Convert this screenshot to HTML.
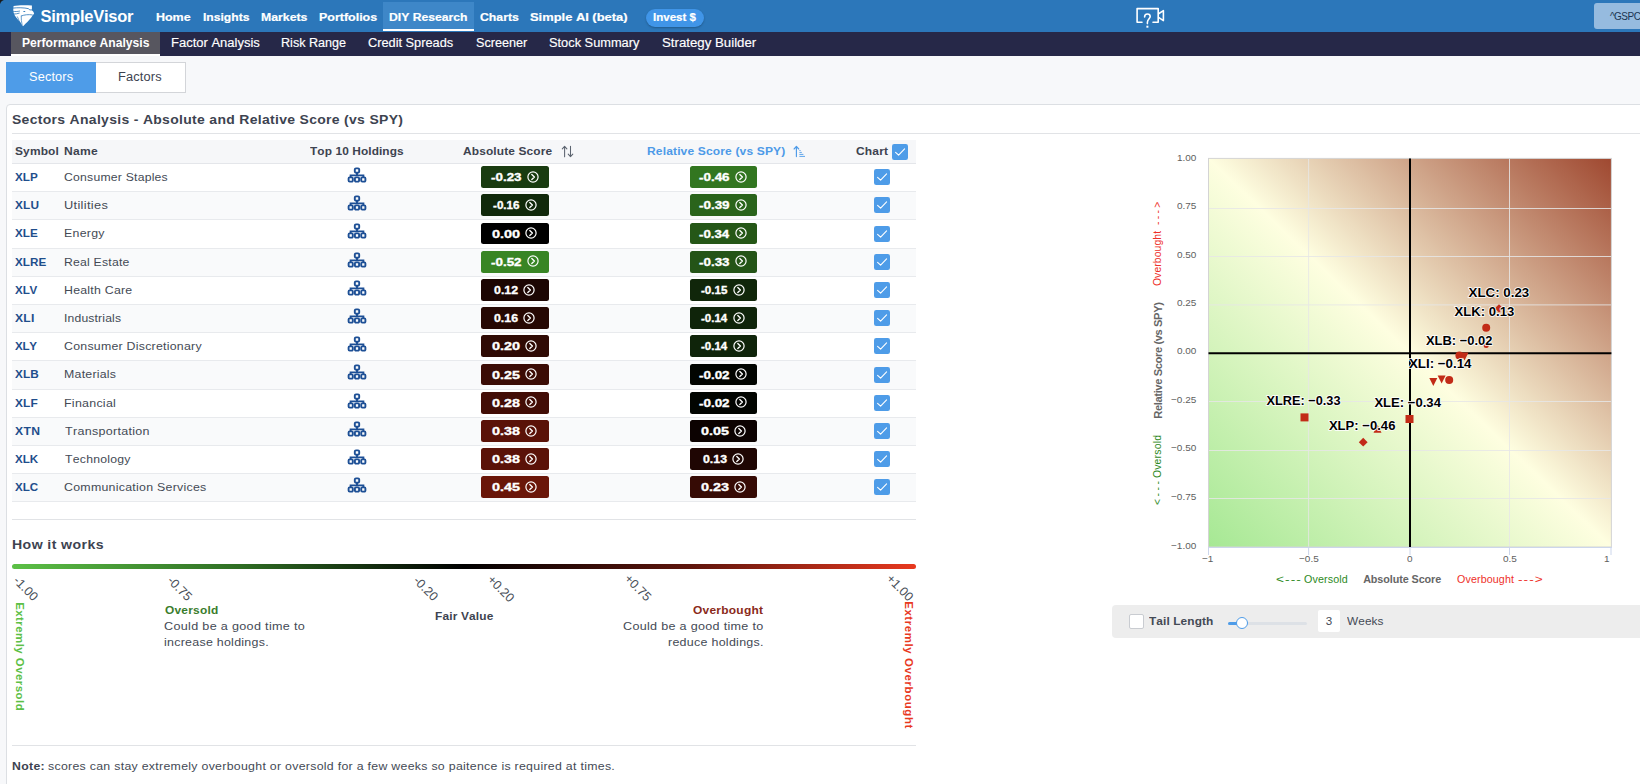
<!DOCTYPE html>
<html><head><meta charset="utf-8"><title>SimpleVisor - Performance Analysis</title>
<style>
html,body{margin:0;padding:0;width:1640px;height:784px;overflow:hidden;background:#f7f8fa;}
body{font-family:"Liberation Sans", sans-serif;font-kerning:none;}
.page{position:relative;width:1640px;height:784px;overflow:hidden;background:#f7f8fa;}
.t{position:absolute;line-height:0;white-space:nowrap;font-kerning:none;}
.b{position:absolute;box-sizing:border-box;}
svg{position:absolute;overflow:visible;}
</style></head><body><div class="page">
<div class="b" style="left:0px;top:0px;width:1640px;height:32px;background:#2c77ba;"></div>
<div class="b" style="left:0px;top:0px;width:4px;height:4px;background:#1a1a1a;"></div>
<div class="b" style="left:0px;top:0px;width:8px;height:8px;background:#2c77ba;border-top-left-radius:5px;"></div>
<svg style="left:10px;top:2px" width="28" height="26" viewBox="0 0 28 26">
<path fill="#fff" d="M3.6 4.0 C8 3.0 16 2.9 21.9 3.6 L21.9 8.2 C23 9 23.9 10.2 24.1 11.7 L22.7 13.3 C21 16.6 16.4 21 13 24.2 C12 23 11 21.5 10.3 20 C8.5 18.5 6.3 15.5 4.8 13.4 C4.2 12.2 3.6 10.8 3.3 9.3 C3.2 7.5 3.3 5.6 3.6 4.0 Z"/>
<g fill="none" stroke="#2c77ba" stroke-linecap="round">
<path stroke-width="0.85" d="M2.8 6.1 C8 5.5 14 5.6 18.6 6.7 L19.7 7.9 L23.4 7.9"/>
<path stroke-width="0.8" d="M2.6 9.3 C5 9.7 7.5 9.6 9.6 9.1"/>
<path stroke-width="0.8" d="M3.2 12.1 C5.5 12 7.4 11.8 9.2 11.2"/>
<path stroke-width="0.7" d="M7.4 14.8 C8.4 16.6 9 18.6 9.8 21.4"/>
<path stroke-width="0.7" d="M11.2 14.1 C11.1 17 11.5 20 12.1 23"/>
<path stroke-width="0.8" d="M11.4 13.9 C14.5 12.7 18.5 12.3 22.3 12.9"/>
</g>
<ellipse cx="14.3" cy="9.5" rx="1.1" ry="0.6" fill="#2c77ba"/>
</svg>
<div class="t" style="left:40.52px;top:15.58px;font-size:16.50px;color:#fff;font-weight:bold;letter-spacing:-0.244px;">SimpleVisor</div>
<div class="b" style="left:383px;top:2px;width:91px;height:29px;background:#3e87c8;"></div>
<div class="b" style="left:383px;top:29px;width:91px;height:2px;background:#ffffff;"></div>
<div class="t" style="left:155.97px;top:17.41px;font-size:11.80px;color:#fff;font-weight:bold;transform:scaleX(1.0572);transform-origin:0 0;-webkit-text-stroke:0.2px #fff;">Home</div>
<div class="t" style="left:202.89px;top:17.41px;font-size:11.80px;color:#fff;font-weight:bold;transform:scaleX(1.0259);transform-origin:0 0;-webkit-text-stroke:0.2px #fff;">Insights</div>
<div class="t" style="left:260.88px;top:17.41px;font-size:11.80px;color:#fff;font-weight:bold;transform:scaleX(1.0409);transform-origin:0 0;-webkit-text-stroke:0.2px #fff;">Markets</div>
<div class="t" style="left:319.17px;top:17.41px;font-size:11.80px;color:#fff;font-weight:bold;transform:scaleX(1.0559);transform-origin:0 0;-webkit-text-stroke:0.2px #fff;">Portfolios</div>
<div class="t" style="left:389.18px;top:17.41px;font-size:11.80px;color:#fff;font-weight:bold;transform:scaleX(1.0327);transform-origin:0 0;-webkit-text-stroke:0.2px #fff;">DIY Research</div>
<div class="t" style="left:479.50px;top:17.41px;font-size:11.80px;color:#fff;font-weight:bold;transform:scaleX(1.0382);transform-origin:0 0;-webkit-text-stroke:0.2px #fff;">Charts</div>
<div class="t" style="left:530.13px;top:17.41px;font-size:11.80px;color:#fff;font-weight:bold;transform:scaleX(1.0936);transform-origin:0 0;-webkit-text-stroke:0.2px #fff;">Simple AI (beta)</div>
<div class="b" style="left:646px;top:9px;width:58px;height:17.5px;background:#4095e8;border-radius:9px;box-shadow:0 1px 2px rgba(0,0,0,.25);"></div>
<div class="t" style="left:653.23px;top:17.42px;font-size:11.20px;color:#fff;font-weight:bold;transform:scaleX(1.0294);transform-origin:0 0;-webkit-text-stroke:0.2px #fff;">Invest $</div>
<svg style="left:1134px;top:6px" width="34" height="24" viewBox="1134 6 34 24">
<path d="M1142 22.2 H1137.1 V8.6 H1158.2 V22.2 H1153" fill="none" stroke="#fff" stroke-width="1.6" stroke-linecap="round" stroke-linejoin="round"/>
<path d="M1158.2 14 L1163.4 10.6 V20.6 L1158.2 17.2" fill="none" stroke="#fff" stroke-width="1.6" stroke-linejoin="round"/>
<path d="M1144.6 17 C1144.6 15 1145.8 14 1147.4 14 C1149 14 1150.2 15 1150.2 16.6 C1150.2 18.6 1147.6 19.2 1147.4 22.2 V23.6" fill="none" stroke="#fff" stroke-width="1.6" stroke-linecap="round"/>
<rect x="1146.4" y="25.7" width="2" height="2" fill="#fff"/>
</svg>
<div class="b" style="left:1594px;top:3px;width:60px;height:26px;background:#96bbdf;border-radius:3px;"></div>
<div class="t" style="left:1609.95px;top:16.54px;font-size:10.00px;color:#1a3552;letter-spacing:-0.526px;">^GSPC</div>
<div class="b" style="left:0px;top:32px;width:1640px;height:24px;background:#262848;"></div>
<div class="b" style="left:11px;top:32px;width:149px;height:22px;background:#57565f;"></div>
<div class="b" style="left:11px;top:54px;width:149px;height:1.5px;background:#ffffff;"></div>
<div class="t" style="left:21.89px;top:43.44px;font-size:12.00px;color:#fff;font-weight:bold;transform:scaleX(1.0107);transform-origin:0 0;">Performance Analysis</div>
<div class="t" style="left:170.93px;top:43.44px;font-size:12.00px;color:#fff;transform:scaleX(1.0830);transform-origin:0 0;-webkit-text-stroke:0.15px #fff;">Factor Analysis</div>
<div class="t" style="left:281.37px;top:43.44px;font-size:12.00px;color:#fff;transform:scaleX(1.0494);transform-origin:0 0;-webkit-text-stroke:0.15px #fff;">Risk Range</div>
<div class="t" style="left:368.35px;top:43.44px;font-size:12.00px;color:#fff;transform:scaleX(1.0633);transform-origin:0 0;-webkit-text-stroke:0.15px #fff;">Credit Spreads</div>
<div class="t" style="left:475.73px;top:43.44px;font-size:12.00px;color:#fff;transform:scaleX(1.0532);transform-origin:0 0;-webkit-text-stroke:0.15px #fff;">Screener</div>
<div class="t" style="left:548.92px;top:43.44px;font-size:12.00px;color:#fff;transform:scaleX(1.0676);transform-origin:0 0;-webkit-text-stroke:0.15px #fff;">Stock Summary</div>
<div class="t" style="left:661.60px;top:43.44px;font-size:12.00px;color:#fff;transform:scaleX(1.1036);transform-origin:0 0;-webkit-text-stroke:0.15px #fff;">Strategy Builder</div>
<div class="b" style="left:6px;top:62px;width:90px;height:30.6px;background:#4e9ce8;"></div>
<div class="t" style="left:28.72px;top:76.94px;font-size:12.30px;color:#fff;letter-spacing:0.155px;transform:scaleX(1.0354);transform-origin:0 0;">Sectors</div>
<div class="b" style="left:96px;top:62px;width:90px;height:30.6px;background:#ffffff;border:1px solid #d3d5d9;border-left:none;"></div>
<div class="t" style="left:118.45px;top:76.94px;font-size:12.30px;color:#3d4350;letter-spacing:0.170px;transform:scaleX(1.0401);transform-origin:0 0;">Factors</div>
<div class="b" style="left:6px;top:104px;width:1660px;height:720px;background:#ffffff;border:1px solid #dcdfe3;border-radius:4px;"></div>
<div class="t" style="left:12.30px;top:119.50px;font-size:13.00px;color:#3d4350;font-weight:bold;letter-spacing:0.294px;transform:scaleX(1.0736);transform-origin:0 0;">Sectors Analysis - Absolute and Relative Score (vs SPY)</div>
<div class="b" style="left:12px;top:133px;width:1640px;height:1px;background:#e1e3e6;"></div>
<div class="b" style="left:12px;top:140px;width:904px;height:23.4px;background:#f6f7f9;"></div>
<div class="b" style="left:12px;top:163px;width:904px;height:1px;background:#e4e6ea;"></div>
<div class="t" style="left:14.86px;top:150.98px;font-size:11.60px;color:#3d4350;font-weight:bold;letter-spacing:0.152px;transform:scaleX(1.0288);transform-origin:0 0;">Symbol</div>
<div class="t" style="left:64.19px;top:150.98px;font-size:11.60px;color:#3d4350;font-weight:bold;letter-spacing:0.266px;transform:scaleX(1.0410);transform-origin:0 0;">Name</div>
<div class="t" style="left:310.07px;top:150.98px;font-size:11.60px;color:#3d4350;font-weight:bold;letter-spacing:0.097px;transform:scaleX(1.0233);transform-origin:0 0;">Top 10 Holdings</div>
<div class="t" style="left:463.10px;top:150.98px;font-size:11.60px;color:#3d4350;font-weight:bold;letter-spacing:0.120px;transform:scaleX(1.0284);transform-origin:0 0;">Absolute Score</div>
<div class="t" style="left:647.00px;top:150.98px;font-size:11.60px;color:#4d9ae8;font-weight:bold;letter-spacing:0.140px;transform:scaleX(1.0373);transform-origin:0 0;">Relative Score (vs SPY)</div>
<div class="t" style="left:855.91px;top:150.98px;font-size:11.60px;color:#3d4350;font-weight:bold;letter-spacing:0.167px;transform:scaleX(1.0349);transform-origin:0 0;">Chart</div>
<svg style="left:558px;top:143px" width="20" height="18" viewBox="558 143 20 18">
<g fill="none" stroke="#5c6470" stroke-width="1.05" stroke-linecap="round" stroke-linejoin="round">
<path d="M564.6 156.8 V146.4 M562.3 148.9 L564.6 146.3 L566.9 148.9"/>
<path d="M570.5 146.2 V156.6 M568.2 154.1 L570.5 156.7 L572.8 154.1"/>
</g></svg>
<svg style="left:790px;top:143px" width="18" height="18" viewBox="790 143 18 18">
<g fill="none" stroke="#4d9ae8" stroke-width="1.15" stroke-linecap="round" stroke-linejoin="round">
<path d="M796.4 156.6 V146.5 M794.1 149 L796.4 146.4 L798.7 149"/>
</g>
<g stroke="#4d9ae8" stroke-width="0.9">
<path d="M799.4 150.5 H800.6 M799.4 152.4 H801.8 M799.4 154.4 H803.4 M799.4 156.4 H805"/>
</g></svg>
<svg style="left:892px;top:144px" width="16" height="16" viewBox="0 0 16 16">
<rect x="0" y="0" width="16" height="16" rx="2.2" fill="#4e9ce8"/>
<path d="M3.6 8.4 L6.6 11.2 L12.6 4.8" fill="none" stroke="#fff" stroke-width="1.1" stroke-linecap="round" stroke-linejoin="round"/>
</svg>
<div class="b" style="left:12px;top:191.19px;width:904px;height:1px;background:#e8eaed;"></div>
<div class="t" style="left:15.10px;top:176.98px;font-size:11.60px;color:#1f4e8c;font-weight:bold;letter-spacing:0.047px;transform:scaleX(1.0065);transform-origin:0 0;">XLP</div>
<div class="t" style="left:64.38px;top:176.98px;font-size:11.60px;color:#444a55;letter-spacing:0.210px;transform:scaleX(1.0527);transform-origin:0 0;">Consumer Staples</div>
<svg style="left:347.00px;top:166.00px" width="20" height="18" viewBox="-10 -9 20 18">
<g fill="none" stroke="#1d4f95" stroke-width="1.9">
<rect x="-2.2" y="-6.6" width="4.4" height="4.4" rx="1.2"/>
<path d="M0 -2.2 V0.2 M-6.4 2.6 V0.4 H6.4 V2.6"/>
<rect x="-8.4" y="2.4" width="4.2" height="4.2" rx="1.1"/>
<rect x="-2.1" y="2.4" width="4.2" height="4.2" rx="1.1"/>
<rect x="4.2" y="2.4" width="4.2" height="4.2" rx="1.1"/>
</g></svg>
<div class="b" style="left:481px;top:166.3px;width:68px;height:21.7px;background:#193b10;border-radius:2.5px;"></div>
<div class="t" style="left:490.90px;top:177.25px;font-size:11.40px;color:#fff;font-weight:bold;transform:scaleX(1.1760);transform-origin:0 0;-webkit-text-stroke:0.35px #fff;">-0.23</div>
<svg style="left:525.58px;top:169.80px" width="14" height="14" viewBox="-7 -7 14 14">
<circle cx="0" cy="0" r="5.1" fill="none" stroke="#fff" stroke-width="1.2"/>
<path d="M-1.2 -2.5 L1.4 0 L-1.2 2.5" fill="none" stroke="#fff" stroke-width="1.35" stroke-linecap="round" stroke-linejoin="round"/>
</svg>
<div class="b" style="left:690px;top:166.3px;width:67px;height:21.7px;background:#327620;border-radius:2.5px;"></div>
<div class="t" style="left:699.40px;top:177.25px;font-size:11.40px;color:#fff;font-weight:bold;transform:scaleX(1.1760);transform-origin:0 0;-webkit-text-stroke:0.35px #fff;">-0.46</div>
<svg style="left:734.07px;top:169.80px" width="14" height="14" viewBox="-7 -7 14 14">
<circle cx="0" cy="0" r="5.1" fill="none" stroke="#fff" stroke-width="1.2"/>
<path d="M-1.2 -2.5 L1.4 0 L-1.2 2.5" fill="none" stroke="#fff" stroke-width="1.35" stroke-linecap="round" stroke-linejoin="round"/>
</svg>
<svg style="left:874px;top:169.20000000000002px" width="16" height="16" viewBox="0 0 16 16">
<rect x="0" y="0" width="16" height="16" rx="2.2" fill="#4e9ce8"/>
<path d="M3.6 8.4 L6.6 11.2 L12.6 4.8" fill="none" stroke="#fff" stroke-width="1.1" stroke-linecap="round" stroke-linejoin="round"/>
</svg>
<div class="b" style="left:12px;top:192.19px;width:904px;height:27.59px;background:#f9fafb;"></div>
<div class="b" style="left:12px;top:219.38px;width:904px;height:1px;background:#e8eaed;"></div>
<div class="t" style="left:15.10px;top:205.17px;font-size:11.60px;color:#1f4e8c;font-weight:bold;letter-spacing:0.139px;transform:scaleX(1.0190);transform-origin:0 0;">XLU</div>
<div class="t" style="left:64.01px;top:205.17px;font-size:11.60px;color:#444a55;letter-spacing:0.286px;transform:scaleX(1.1053);transform-origin:0 0;">Utilities</div>
<svg style="left:347.00px;top:194.19px" width="20" height="18" viewBox="-10 -9 20 18">
<g fill="none" stroke="#1d4f95" stroke-width="1.9">
<rect x="-2.2" y="-6.6" width="4.4" height="4.4" rx="1.2"/>
<path d="M0 -2.2 V0.2 M-6.4 2.6 V0.4 H6.4 V2.6"/>
<rect x="-8.4" y="2.4" width="4.2" height="4.2" rx="1.1"/>
<rect x="-2.1" y="2.4" width="4.2" height="4.2" rx="1.1"/>
<rect x="4.2" y="2.4" width="4.2" height="4.2" rx="1.1"/>
</g></svg>
<div class="b" style="left:481px;top:194.49px;width:68px;height:21.7px;background:#11290b;border-radius:2.5px;"></div>
<div class="t" style="left:492.89px;top:205.44px;font-size:11.40px;color:#fff;font-weight:bold;transform:scaleX(1.0228);transform-origin:0 0;-webkit-text-stroke:0.35px #fff;">-0.16</div>
<svg style="left:523.65px;top:197.99px" width="14" height="14" viewBox="-7 -7 14 14">
<circle cx="0" cy="0" r="5.1" fill="none" stroke="#fff" stroke-width="1.2"/>
<path d="M-1.2 -2.5 L1.4 0 L-1.2 2.5" fill="none" stroke="#fff" stroke-width="1.35" stroke-linecap="round" stroke-linejoin="round"/>
</svg>
<div class="b" style="left:690px;top:194.49px;width:67px;height:21.7px;background:#2a641b;border-radius:2.5px;"></div>
<div class="t" style="left:699.40px;top:205.44px;font-size:11.40px;color:#fff;font-weight:bold;transform:scaleX(1.1766);transform-origin:0 0;-webkit-text-stroke:0.35px #fff;">-0.39</div>
<svg style="left:734.07px;top:197.99px" width="14" height="14" viewBox="-7 -7 14 14">
<circle cx="0" cy="0" r="5.1" fill="none" stroke="#fff" stroke-width="1.2"/>
<path d="M-1.2 -2.5 L1.4 0 L-1.2 2.5" fill="none" stroke="#fff" stroke-width="1.35" stroke-linecap="round" stroke-linejoin="round"/>
</svg>
<svg style="left:874px;top:197.39000000000001px" width="16" height="16" viewBox="0 0 16 16">
<rect x="0" y="0" width="16" height="16" rx="2.2" fill="#4e9ce8"/>
<path d="M3.6 8.4 L6.6 11.2 L12.6 4.8" fill="none" stroke="#fff" stroke-width="1.1" stroke-linecap="round" stroke-linejoin="round"/>
</svg>
<div class="b" style="left:12px;top:247.57px;width:904px;height:1px;background:#e8eaed;"></div>
<div class="t" style="left:15.10px;top:233.36px;font-size:11.60px;color:#1f4e8c;font-weight:bold;letter-spacing:0.059px;transform:scaleX(1.0080);transform-origin:0 0;">XLE</div>
<div class="t" style="left:63.99px;top:233.36px;font-size:11.60px;color:#444a55;letter-spacing:0.280px;transform:scaleX(1.0624);transform-origin:0 0;">Energy</div>
<svg style="left:347.00px;top:222.38px" width="20" height="18" viewBox="-10 -9 20 18">
<g fill="none" stroke="#1d4f95" stroke-width="1.9">
<rect x="-2.2" y="-6.6" width="4.4" height="4.4" rx="1.2"/>
<path d="M0 -2.2 V0.2 M-6.4 2.6 V0.4 H6.4 V2.6"/>
<rect x="-8.4" y="2.4" width="4.2" height="4.2" rx="1.1"/>
<rect x="-2.1" y="2.4" width="4.2" height="4.2" rx="1.1"/>
<rect x="4.2" y="2.4" width="4.2" height="4.2" rx="1.1"/>
</g></svg>
<div class="b" style="left:481px;top:222.68px;width:68px;height:21.7px;background:#000000;border-radius:2.5px;"></div>
<div class="t" style="left:492.15px;top:233.63px;font-size:11.40px;color:#fff;font-weight:bold;transform:scaleX(1.2671);transform-origin:0 0;-webkit-text-stroke:0.35px #fff;">0.00</div>
<svg style="left:524.28px;top:226.18px" width="14" height="14" viewBox="-7 -7 14 14">
<circle cx="0" cy="0" r="5.1" fill="none" stroke="#fff" stroke-width="1.2"/>
<path d="M-1.2 -2.5 L1.4 0 L-1.2 2.5" fill="none" stroke="#fff" stroke-width="1.35" stroke-linecap="round" stroke-linejoin="round"/>
</svg>
<div class="b" style="left:690px;top:222.68px;width:67px;height:21.7px;background:#255717;border-radius:2.5px;"></div>
<div class="t" style="left:699.41px;top:233.63px;font-size:11.40px;color:#fff;font-weight:bold;transform:scaleX(1.1598);transform-origin:0 0;-webkit-text-stroke:0.35px #fff;">-0.34</div>
<svg style="left:734.07px;top:226.18px" width="14" height="14" viewBox="-7 -7 14 14">
<circle cx="0" cy="0" r="5.1" fill="none" stroke="#fff" stroke-width="1.2"/>
<path d="M-1.2 -2.5 L1.4 0 L-1.2 2.5" fill="none" stroke="#fff" stroke-width="1.35" stroke-linecap="round" stroke-linejoin="round"/>
</svg>
<svg style="left:874px;top:225.58px" width="16" height="16" viewBox="0 0 16 16">
<rect x="0" y="0" width="16" height="16" rx="2.2" fill="#4e9ce8"/>
<path d="M3.6 8.4 L6.6 11.2 L12.6 4.8" fill="none" stroke="#fff" stroke-width="1.1" stroke-linecap="round" stroke-linejoin="round"/>
</svg>
<div class="b" style="left:12px;top:248.57000000000002px;width:904px;height:27.59px;background:#f9fafb;"></div>
<div class="b" style="left:12px;top:275.76000000000005px;width:904px;height:1px;background:#e8eaed;"></div>
<div class="t" style="left:15.10px;top:261.55px;font-size:11.60px;color:#1f4e8c;font-weight:bold;letter-spacing:0.042px;transform:scaleX(1.0063);transform-origin:0 0;">XLRE</div>
<div class="t" style="left:64.00px;top:261.55px;font-size:11.60px;color:#444a55;letter-spacing:0.201px;transform:scaleX(1.0544);transform-origin:0 0;">Real Estate</div>
<svg style="left:347.00px;top:250.57px" width="20" height="18" viewBox="-10 -9 20 18">
<g fill="none" stroke="#1d4f95" stroke-width="1.9">
<rect x="-2.2" y="-6.6" width="4.4" height="4.4" rx="1.2"/>
<path d="M0 -2.2 V0.2 M-6.4 2.6 V0.4 H6.4 V2.6"/>
<rect x="-8.4" y="2.4" width="4.2" height="4.2" rx="1.1"/>
<rect x="-2.1" y="2.4" width="4.2" height="4.2" rx="1.1"/>
<rect x="4.2" y="2.4" width="4.2" height="4.2" rx="1.1"/>
</g></svg>
<div class="b" style="left:481px;top:250.87000000000003px;width:68px;height:21.7px;background:#388524;border-radius:2.5px;"></div>
<div class="t" style="left:490.90px;top:261.82px;font-size:11.40px;color:#fff;font-weight:bold;transform:scaleX(1.1781);transform-origin:0 0;-webkit-text-stroke:0.35px #fff;">-0.52</div>
<svg style="left:525.58px;top:254.37px" width="14" height="14" viewBox="-7 -7 14 14">
<circle cx="0" cy="0" r="5.1" fill="none" stroke="#fff" stroke-width="1.2"/>
<path d="M-1.2 -2.5 L1.4 0 L-1.2 2.5" fill="none" stroke="#fff" stroke-width="1.35" stroke-linecap="round" stroke-linejoin="round"/>
</svg>
<div class="b" style="left:690px;top:250.87000000000003px;width:67px;height:21.7px;background:#245417;border-radius:2.5px;"></div>
<div class="t" style="left:699.40px;top:261.82px;font-size:11.40px;color:#fff;font-weight:bold;transform:scaleX(1.1760);transform-origin:0 0;-webkit-text-stroke:0.35px #fff;">-0.33</div>
<svg style="left:734.07px;top:254.37px" width="14" height="14" viewBox="-7 -7 14 14">
<circle cx="0" cy="0" r="5.1" fill="none" stroke="#fff" stroke-width="1.2"/>
<path d="M-1.2 -2.5 L1.4 0 L-1.2 2.5" fill="none" stroke="#fff" stroke-width="1.35" stroke-linecap="round" stroke-linejoin="round"/>
</svg>
<svg style="left:874px;top:253.77000000000004px" width="16" height="16" viewBox="0 0 16 16">
<rect x="0" y="0" width="16" height="16" rx="2.2" fill="#4e9ce8"/>
<path d="M3.6 8.4 L6.6 11.2 L12.6 4.8" fill="none" stroke="#fff" stroke-width="1.1" stroke-linecap="round" stroke-linejoin="round"/>
</svg>
<div class="b" style="left:12px;top:303.95000000000005px;width:904px;height:1px;background:#e8eaed;"></div>
<div class="t" style="left:15.10px;top:289.74px;font-size:11.60px;color:#1f4e8c;font-weight:bold;letter-spacing:-0.189px;">XLV</div>
<div class="t" style="left:63.99px;top:289.74px;font-size:11.60px;color:#444a55;letter-spacing:0.236px;transform:scaleX(1.0623);transform-origin:0 0;">Health Care</div>
<svg style="left:347.00px;top:278.76px" width="20" height="18" viewBox="-10 -9 20 18">
<g fill="none" stroke="#1d4f95" stroke-width="1.9">
<rect x="-2.2" y="-6.6" width="4.4" height="4.4" rx="1.2"/>
<path d="M0 -2.2 V0.2 M-6.4 2.6 V0.4 H6.4 V2.6"/>
<rect x="-8.4" y="2.4" width="4.2" height="4.2" rx="1.1"/>
<rect x="-2.1" y="2.4" width="4.2" height="4.2" rx="1.1"/>
<rect x="4.2" y="2.4" width="4.2" height="4.2" rx="1.1"/>
</g></svg>
<div class="b" style="left:481px;top:279.06px;width:68px;height:21.7px;background:#1c0603;border-radius:2.5px;"></div>
<div class="t" style="left:494.16px;top:290.01px;font-size:11.40px;color:#fff;font-weight:bold;transform:scaleX(1.0855);transform-origin:0 0;-webkit-text-stroke:0.35px #fff;">0.12</div>
<svg style="left:522.35px;top:282.56px" width="14" height="14" viewBox="-7 -7 14 14">
<circle cx="0" cy="0" r="5.1" fill="none" stroke="#fff" stroke-width="1.2"/>
<path d="M-1.2 -2.5 L1.4 0 L-1.2 2.5" fill="none" stroke="#fff" stroke-width="1.35" stroke-linecap="round" stroke-linejoin="round"/>
</svg>
<div class="b" style="left:690px;top:279.06px;width:67px;height:21.7px;background:#10260a;border-radius:2.5px;"></div>
<div class="t" style="left:701.40px;top:290.01px;font-size:11.40px;color:#fff;font-weight:bold;transform:scaleX(1.0190);transform-origin:0 0;-webkit-text-stroke:0.35px #fff;">-0.15</div>
<svg style="left:732.15px;top:282.56px" width="14" height="14" viewBox="-7 -7 14 14">
<circle cx="0" cy="0" r="5.1" fill="none" stroke="#fff" stroke-width="1.2"/>
<path d="M-1.2 -2.5 L1.4 0 L-1.2 2.5" fill="none" stroke="#fff" stroke-width="1.35" stroke-linecap="round" stroke-linejoin="round"/>
</svg>
<svg style="left:874px;top:281.96000000000004px" width="16" height="16" viewBox="0 0 16 16">
<rect x="0" y="0" width="16" height="16" rx="2.2" fill="#4e9ce8"/>
<path d="M3.6 8.4 L6.6 11.2 L12.6 4.8" fill="none" stroke="#fff" stroke-width="1.1" stroke-linecap="round" stroke-linejoin="round"/>
</svg>
<div class="b" style="left:12px;top:304.95000000000005px;width:904px;height:27.59px;background:#f9fafb;"></div>
<div class="b" style="left:12px;top:332.14000000000004px;width:904px;height:1px;background:#e8eaed;"></div>
<div class="t" style="left:15.09px;top:317.93px;font-size:11.60px;color:#1f4e8c;font-weight:bold;letter-spacing:0.255px;transform:scaleX(1.0466);transform-origin:0 0;">XLI</div>
<div class="t" style="left:63.88px;top:317.93px;font-size:11.60px;color:#444a55;letter-spacing:0.157px;transform:scaleX(1.0481);transform-origin:0 0;">Industrials</div>
<svg style="left:347.00px;top:306.95px" width="20" height="18" viewBox="-10 -9 20 18">
<g fill="none" stroke="#1d4f95" stroke-width="1.9">
<rect x="-2.2" y="-6.6" width="4.4" height="4.4" rx="1.2"/>
<path d="M0 -2.2 V0.2 M-6.4 2.6 V0.4 H6.4 V2.6"/>
<rect x="-8.4" y="2.4" width="4.2" height="4.2" rx="1.1"/>
<rect x="-2.1" y="2.4" width="4.2" height="4.2" rx="1.1"/>
<rect x="4.2" y="2.4" width="4.2" height="4.2" rx="1.1"/>
</g></svg>
<div class="b" style="left:481px;top:307.25px;width:68px;height:21.7px;background:#260803;border-radius:2.5px;"></div>
<div class="t" style="left:494.16px;top:318.20px;font-size:11.40px;color:#fff;font-weight:bold;transform:scaleX(1.0832);transform-origin:0 0;-webkit-text-stroke:0.35px #fff;">0.16</div>
<svg style="left:522.35px;top:310.75px" width="14" height="14" viewBox="-7 -7 14 14">
<circle cx="0" cy="0" r="5.1" fill="none" stroke="#fff" stroke-width="1.2"/>
<path d="M-1.2 -2.5 L1.4 0 L-1.2 2.5" fill="none" stroke="#fff" stroke-width="1.35" stroke-linecap="round" stroke-linejoin="round"/>
</svg>
<div class="b" style="left:690px;top:307.25px;width:67px;height:21.7px;background:#0f240a;border-radius:2.5px;"></div>
<div class="t" style="left:701.40px;top:318.20px;font-size:11.40px;color:#fff;font-weight:bold;transform:scaleX(1.0087);transform-origin:0 0;-webkit-text-stroke:0.35px #fff;">-0.14</div>
<svg style="left:732.15px;top:310.75px" width="14" height="14" viewBox="-7 -7 14 14">
<circle cx="0" cy="0" r="5.1" fill="none" stroke="#fff" stroke-width="1.2"/>
<path d="M-1.2 -2.5 L1.4 0 L-1.2 2.5" fill="none" stroke="#fff" stroke-width="1.35" stroke-linecap="round" stroke-linejoin="round"/>
</svg>
<svg style="left:874px;top:310.15000000000003px" width="16" height="16" viewBox="0 0 16 16">
<rect x="0" y="0" width="16" height="16" rx="2.2" fill="#4e9ce8"/>
<path d="M3.6 8.4 L6.6 11.2 L12.6 4.8" fill="none" stroke="#fff" stroke-width="1.1" stroke-linecap="round" stroke-linejoin="round"/>
</svg>
<div class="b" style="left:12px;top:360.33000000000004px;width:904px;height:1px;background:#e8eaed;"></div>
<div class="t" style="left:15.10px;top:346.12px;font-size:11.60px;color:#1f4e8c;font-weight:bold;letter-spacing:-0.286px;">XLY</div>
<div class="t" style="left:64.37px;top:346.12px;font-size:11.60px;color:#444a55;letter-spacing:0.236px;transform:scaleX(1.0639);transform-origin:0 0;">Consumer Discretionary</div>
<svg style="left:347.00px;top:335.14px" width="20" height="18" viewBox="-10 -9 20 18">
<g fill="none" stroke="#1d4f95" stroke-width="1.9">
<rect x="-2.2" y="-6.6" width="4.4" height="4.4" rx="1.2"/>
<path d="M0 -2.2 V0.2 M-6.4 2.6 V0.4 H6.4 V2.6"/>
<rect x="-8.4" y="2.4" width="4.2" height="4.2" rx="1.1"/>
<rect x="-2.1" y="2.4" width="4.2" height="4.2" rx="1.1"/>
<rect x="4.2" y="2.4" width="4.2" height="4.2" rx="1.1"/>
</g></svg>
<div class="b" style="left:481px;top:335.44px;width:68px;height:21.7px;background:#2f0a04;border-radius:2.5px;"></div>
<div class="t" style="left:492.15px;top:346.39px;font-size:11.40px;color:#fff;font-weight:bold;transform:scaleX(1.2671);transform-origin:0 0;-webkit-text-stroke:0.35px #fff;">0.20</div>
<svg style="left:524.28px;top:338.94px" width="14" height="14" viewBox="-7 -7 14 14">
<circle cx="0" cy="0" r="5.1" fill="none" stroke="#fff" stroke-width="1.2"/>
<path d="M-1.2 -2.5 L1.4 0 L-1.2 2.5" fill="none" stroke="#fff" stroke-width="1.35" stroke-linecap="round" stroke-linejoin="round"/>
</svg>
<div class="b" style="left:690px;top:335.44px;width:67px;height:21.7px;background:#0f240a;border-radius:2.5px;"></div>
<div class="t" style="left:701.40px;top:346.39px;font-size:11.40px;color:#fff;font-weight:bold;transform:scaleX(1.0087);transform-origin:0 0;-webkit-text-stroke:0.35px #fff;">-0.14</div>
<svg style="left:732.15px;top:338.94px" width="14" height="14" viewBox="-7 -7 14 14">
<circle cx="0" cy="0" r="5.1" fill="none" stroke="#fff" stroke-width="1.2"/>
<path d="M-1.2 -2.5 L1.4 0 L-1.2 2.5" fill="none" stroke="#fff" stroke-width="1.35" stroke-linecap="round" stroke-linejoin="round"/>
</svg>
<svg style="left:874px;top:338.34000000000003px" width="16" height="16" viewBox="0 0 16 16">
<rect x="0" y="0" width="16" height="16" rx="2.2" fill="#4e9ce8"/>
<path d="M3.6 8.4 L6.6 11.2 L12.6 4.8" fill="none" stroke="#fff" stroke-width="1.1" stroke-linecap="round" stroke-linejoin="round"/>
</svg>
<div class="b" style="left:12px;top:361.33000000000004px;width:904px;height:27.59px;background:#f9fafb;"></div>
<div class="b" style="left:12px;top:388.52000000000004px;width:904px;height:1px;background:#e8eaed;"></div>
<div class="t" style="left:15.10px;top:374.31px;font-size:11.60px;color:#1f4e8c;font-weight:bold;letter-spacing:0.104px;transform:scaleX(1.0141);transform-origin:0 0;">XLB</div>
<div class="t" style="left:63.99px;top:374.31px;font-size:11.60px;color:#444a55;letter-spacing:0.231px;transform:scaleX(1.0645);transform-origin:0 0;">Materials</div>
<svg style="left:347.00px;top:363.33px" width="20" height="18" viewBox="-10 -9 20 18">
<g fill="none" stroke="#1d4f95" stroke-width="1.9">
<rect x="-2.2" y="-6.6" width="4.4" height="4.4" rx="1.2"/>
<path d="M0 -2.2 V0.2 M-6.4 2.6 V0.4 H6.4 V2.6"/>
<rect x="-8.4" y="2.4" width="4.2" height="4.2" rx="1.1"/>
<rect x="-2.1" y="2.4" width="4.2" height="4.2" rx="1.1"/>
<rect x="4.2" y="2.4" width="4.2" height="4.2" rx="1.1"/>
</g></svg>
<div class="b" style="left:481px;top:363.63px;width:68px;height:21.7px;background:#3b0c05;border-radius:2.5px;"></div>
<div class="t" style="left:492.16px;top:374.58px;font-size:11.40px;color:#fff;font-weight:bold;transform:scaleX(1.2582);transform-origin:0 0;-webkit-text-stroke:0.35px #fff;">0.25</div>
<svg style="left:524.28px;top:367.13px" width="14" height="14" viewBox="-7 -7 14 14">
<circle cx="0" cy="0" r="5.1" fill="none" stroke="#fff" stroke-width="1.2"/>
<path d="M-1.2 -2.5 L1.4 0 L-1.2 2.5" fill="none" stroke="#fff" stroke-width="1.35" stroke-linecap="round" stroke-linejoin="round"/>
</svg>
<div class="b" style="left:690px;top:363.63px;width:67px;height:21.7px;background:#020501;border-radius:2.5px;"></div>
<div class="t" style="left:699.40px;top:374.58px;font-size:11.40px;color:#fff;font-weight:bold;transform:scaleX(1.1781);transform-origin:0 0;-webkit-text-stroke:0.35px #fff;">-0.02</div>
<svg style="left:734.07px;top:367.13px" width="14" height="14" viewBox="-7 -7 14 14">
<circle cx="0" cy="0" r="5.1" fill="none" stroke="#fff" stroke-width="1.2"/>
<path d="M-1.2 -2.5 L1.4 0 L-1.2 2.5" fill="none" stroke="#fff" stroke-width="1.35" stroke-linecap="round" stroke-linejoin="round"/>
</svg>
<svg style="left:874px;top:366.53000000000003px" width="16" height="16" viewBox="0 0 16 16">
<rect x="0" y="0" width="16" height="16" rx="2.2" fill="#4e9ce8"/>
<path d="M3.6 8.4 L6.6 11.2 L12.6 4.8" fill="none" stroke="#fff" stroke-width="1.1" stroke-linecap="round" stroke-linejoin="round"/>
</svg>
<div class="b" style="left:12px;top:416.71000000000004px;width:904px;height:1px;background:#e8eaed;"></div>
<div class="t" style="left:15.10px;top:402.50px;font-size:11.60px;color:#1f4e8c;font-weight:bold;letter-spacing:0.179px;transform:scaleX(1.0258);transform-origin:0 0;">XLF</div>
<div class="t" style="left:63.98px;top:402.50px;font-size:11.60px;color:#444a55;letter-spacing:0.248px;transform:scaleX(1.0712);transform-origin:0 0;">Financial</div>
<svg style="left:347.00px;top:391.52px" width="20" height="18" viewBox="-10 -9 20 18">
<g fill="none" stroke="#1d4f95" stroke-width="1.9">
<rect x="-2.2" y="-6.6" width="4.4" height="4.4" rx="1.2"/>
<path d="M0 -2.2 V0.2 M-6.4 2.6 V0.4 H6.4 V2.6"/>
<rect x="-8.4" y="2.4" width="4.2" height="4.2" rx="1.1"/>
<rect x="-2.1" y="2.4" width="4.2" height="4.2" rx="1.1"/>
<rect x="4.2" y="2.4" width="4.2" height="4.2" rx="1.1"/>
</g></svg>
<div class="b" style="left:481px;top:391.82px;width:68px;height:21.7px;background:#420d06;border-radius:2.5px;"></div>
<div class="t" style="left:492.16px;top:402.77px;font-size:11.40px;color:#fff;font-weight:bold;transform:scaleX(1.2602);transform-origin:0 0;-webkit-text-stroke:0.35px #fff;">0.28</div>
<svg style="left:524.28px;top:395.32px" width="14" height="14" viewBox="-7 -7 14 14">
<circle cx="0" cy="0" r="5.1" fill="none" stroke="#fff" stroke-width="1.2"/>
<path d="M-1.2 -2.5 L1.4 0 L-1.2 2.5" fill="none" stroke="#fff" stroke-width="1.35" stroke-linecap="round" stroke-linejoin="round"/>
</svg>
<div class="b" style="left:690px;top:391.82px;width:67px;height:21.7px;background:#020501;border-radius:2.5px;"></div>
<div class="t" style="left:699.40px;top:402.77px;font-size:11.40px;color:#fff;font-weight:bold;transform:scaleX(1.1781);transform-origin:0 0;-webkit-text-stroke:0.35px #fff;">-0.02</div>
<svg style="left:734.07px;top:395.32px" width="14" height="14" viewBox="-7 -7 14 14">
<circle cx="0" cy="0" r="5.1" fill="none" stroke="#fff" stroke-width="1.2"/>
<path d="M-1.2 -2.5 L1.4 0 L-1.2 2.5" fill="none" stroke="#fff" stroke-width="1.35" stroke-linecap="round" stroke-linejoin="round"/>
</svg>
<svg style="left:874px;top:394.72px" width="16" height="16" viewBox="0 0 16 16">
<rect x="0" y="0" width="16" height="16" rx="2.2" fill="#4e9ce8"/>
<path d="M3.6 8.4 L6.6 11.2 L12.6 4.8" fill="none" stroke="#fff" stroke-width="1.1" stroke-linecap="round" stroke-linejoin="round"/>
</svg>
<div class="b" style="left:12px;top:417.71000000000004px;width:904px;height:27.59px;background:#f9fafb;"></div>
<div class="b" style="left:12px;top:444.90000000000003px;width:904px;height:1px;background:#e8eaed;"></div>
<div class="t" style="left:15.09px;top:430.69px;font-size:11.60px;color:#1f4e8c;font-weight:bold;letter-spacing:0.322px;transform:scaleX(1.0453);transform-origin:0 0;">XTN</div>
<div class="t" style="left:64.72px;top:430.69px;font-size:11.60px;color:#444a55;letter-spacing:0.275px;transform:scaleX(1.0782);transform-origin:0 0;">Transportation</div>
<svg style="left:347.00px;top:419.71px" width="20" height="18" viewBox="-10 -9 20 18">
<g fill="none" stroke="#1d4f95" stroke-width="1.9">
<rect x="-2.2" y="-6.6" width="4.4" height="4.4" rx="1.2"/>
<path d="M0 -2.2 V0.2 M-6.4 2.6 V0.4 H6.4 V2.6"/>
<rect x="-8.4" y="2.4" width="4.2" height="4.2" rx="1.1"/>
<rect x="-2.1" y="2.4" width="4.2" height="4.2" rx="1.1"/>
<rect x="4.2" y="2.4" width="4.2" height="4.2" rx="1.1"/>
</g></svg>
<div class="b" style="left:481px;top:420.01px;width:68px;height:21.7px;background:#5a1208;border-radius:2.5px;"></div>
<div class="t" style="left:492.16px;top:430.96px;font-size:11.40px;color:#fff;font-weight:bold;transform:scaleX(1.2602);transform-origin:0 0;-webkit-text-stroke:0.35px #fff;">0.38</div>
<svg style="left:524.28px;top:423.51px" width="14" height="14" viewBox="-7 -7 14 14">
<circle cx="0" cy="0" r="5.1" fill="none" stroke="#fff" stroke-width="1.2"/>
<path d="M-1.2 -2.5 L1.4 0 L-1.2 2.5" fill="none" stroke="#fff" stroke-width="1.35" stroke-linecap="round" stroke-linejoin="round"/>
</svg>
<div class="b" style="left:690px;top:420.01px;width:67px;height:21.7px;background:#0c0201;border-radius:2.5px;"></div>
<div class="t" style="left:700.66px;top:430.96px;font-size:11.40px;color:#fff;font-weight:bold;transform:scaleX(1.2582);transform-origin:0 0;-webkit-text-stroke:0.35px #fff;">0.05</div>
<svg style="left:732.78px;top:423.51px" width="14" height="14" viewBox="-7 -7 14 14">
<circle cx="0" cy="0" r="5.1" fill="none" stroke="#fff" stroke-width="1.2"/>
<path d="M-1.2 -2.5 L1.4 0 L-1.2 2.5" fill="none" stroke="#fff" stroke-width="1.35" stroke-linecap="round" stroke-linejoin="round"/>
</svg>
<svg style="left:874px;top:422.91px" width="16" height="16" viewBox="0 0 16 16">
<rect x="0" y="0" width="16" height="16" rx="2.2" fill="#4e9ce8"/>
<path d="M3.6 8.4 L6.6 11.2 L12.6 4.8" fill="none" stroke="#fff" stroke-width="1.1" stroke-linecap="round" stroke-linejoin="round"/>
</svg>
<div class="b" style="left:12px;top:473.0900000000001px;width:904px;height:1px;background:#e8eaed;"></div>
<div class="t" style="left:15.10px;top:458.88px;font-size:11.60px;color:#1f4e8c;font-weight:bold;letter-spacing:-0.095px;">XLK</div>
<div class="t" style="left:64.73px;top:458.88px;font-size:11.60px;color:#444a55;letter-spacing:0.232px;transform:scaleX(1.0554);transform-origin:0 0;">Technology</div>
<svg style="left:347.00px;top:447.90px" width="20" height="18" viewBox="-10 -9 20 18">
<g fill="none" stroke="#1d4f95" stroke-width="1.9">
<rect x="-2.2" y="-6.6" width="4.4" height="4.4" rx="1.2"/>
<path d="M0 -2.2 V0.2 M-6.4 2.6 V0.4 H6.4 V2.6"/>
<rect x="-8.4" y="2.4" width="4.2" height="4.2" rx="1.1"/>
<rect x="-2.1" y="2.4" width="4.2" height="4.2" rx="1.1"/>
<rect x="4.2" y="2.4" width="4.2" height="4.2" rx="1.1"/>
</g></svg>
<div class="b" style="left:481px;top:448.20000000000005px;width:68px;height:21.7px;background:#5a1208;border-radius:2.5px;"></div>
<div class="t" style="left:492.16px;top:459.15px;font-size:11.40px;color:#fff;font-weight:bold;transform:scaleX(1.2602);transform-origin:0 0;-webkit-text-stroke:0.35px #fff;">0.38</div>
<svg style="left:524.28px;top:451.70px" width="14" height="14" viewBox="-7 -7 14 14">
<circle cx="0" cy="0" r="5.1" fill="none" stroke="#fff" stroke-width="1.2"/>
<path d="M-1.2 -2.5 L1.4 0 L-1.2 2.5" fill="none" stroke="#fff" stroke-width="1.35" stroke-linecap="round" stroke-linejoin="round"/>
</svg>
<div class="b" style="left:690px;top:448.20000000000005px;width:67px;height:21.7px;background:#1f0603;border-radius:2.5px;"></div>
<div class="t" style="left:702.66px;top:459.15px;font-size:11.40px;color:#fff;font-weight:bold;transform:scaleX(1.0832);transform-origin:0 0;-webkit-text-stroke:0.35px #fff;">0.13</div>
<svg style="left:730.85px;top:451.70px" width="14" height="14" viewBox="-7 -7 14 14">
<circle cx="0" cy="0" r="5.1" fill="none" stroke="#fff" stroke-width="1.2"/>
<path d="M-1.2 -2.5 L1.4 0 L-1.2 2.5" fill="none" stroke="#fff" stroke-width="1.35" stroke-linecap="round" stroke-linejoin="round"/>
</svg>
<svg style="left:874px;top:451.1000000000001px" width="16" height="16" viewBox="0 0 16 16">
<rect x="0" y="0" width="16" height="16" rx="2.2" fill="#4e9ce8"/>
<path d="M3.6 8.4 L6.6 11.2 L12.6 4.8" fill="none" stroke="#fff" stroke-width="1.1" stroke-linecap="round" stroke-linejoin="round"/>
</svg>
<div class="b" style="left:12px;top:474.09000000000003px;width:904px;height:27.59px;background:#f9fafb;"></div>
<div class="b" style="left:12px;top:501.28000000000003px;width:904px;height:1px;background:#e8eaed;"></div>
<div class="t" style="left:15.10px;top:487.07px;font-size:11.60px;color:#1f4e8c;font-weight:bold;letter-spacing:-0.090px;">XLC</div>
<div class="t" style="left:64.37px;top:487.07px;font-size:11.60px;color:#444a55;letter-spacing:0.250px;transform:scaleX(1.0661);transform-origin:0 0;">Communication Services</div>
<svg style="left:347.00px;top:476.09px" width="20" height="18" viewBox="-10 -9 20 18">
<g fill="none" stroke="#1d4f95" stroke-width="1.9">
<rect x="-2.2" y="-6.6" width="4.4" height="4.4" rx="1.2"/>
<path d="M0 -2.2 V0.2 M-6.4 2.6 V0.4 H6.4 V2.6"/>
<rect x="-8.4" y="2.4" width="4.2" height="4.2" rx="1.1"/>
<rect x="-2.1" y="2.4" width="4.2" height="4.2" rx="1.1"/>
<rect x="4.2" y="2.4" width="4.2" height="4.2" rx="1.1"/>
</g></svg>
<div class="b" style="left:481px;top:476.39px;width:68px;height:21.7px;background:#6a1609;border-radius:2.5px;"></div>
<div class="t" style="left:492.16px;top:487.34px;font-size:11.40px;color:#fff;font-weight:bold;transform:scaleX(1.2582);transform-origin:0 0;-webkit-text-stroke:0.35px #fff;">0.45</div>
<svg style="left:524.28px;top:479.89px" width="14" height="14" viewBox="-7 -7 14 14">
<circle cx="0" cy="0" r="5.1" fill="none" stroke="#fff" stroke-width="1.2"/>
<path d="M-1.2 -2.5 L1.4 0 L-1.2 2.5" fill="none" stroke="#fff" stroke-width="1.35" stroke-linecap="round" stroke-linejoin="round"/>
</svg>
<div class="b" style="left:690px;top:476.39px;width:67px;height:21.7px;background:#360b05;border-radius:2.5px;"></div>
<div class="t" style="left:700.66px;top:487.34px;font-size:11.40px;color:#fff;font-weight:bold;transform:scaleX(1.2638);transform-origin:0 0;-webkit-text-stroke:0.35px #fff;">0.23</div>
<svg style="left:732.78px;top:479.89px" width="14" height="14" viewBox="-7 -7 14 14">
<circle cx="0" cy="0" r="5.1" fill="none" stroke="#fff" stroke-width="1.2"/>
<path d="M-1.2 -2.5 L1.4 0 L-1.2 2.5" fill="none" stroke="#fff" stroke-width="1.35" stroke-linecap="round" stroke-linejoin="round"/>
</svg>
<svg style="left:874px;top:479.29px" width="16" height="16" viewBox="0 0 16 16">
<rect x="0" y="0" width="16" height="16" rx="2.2" fill="#4e9ce8"/>
<path d="M3.6 8.4 L6.6 11.2 L12.6 4.8" fill="none" stroke="#fff" stroke-width="1.1" stroke-linecap="round" stroke-linejoin="round"/>
</svg>
<div class="b" style="left:12px;top:519px;width:904px;height:1px;background:#e1e3e6;"></div>
<div class="t" style="left:12.06px;top:544.50px;font-size:13.00px;color:#3d4350;font-weight:bold;letter-spacing:0.376px;transform:scaleX(1.0855);transform-origin:0 0;">How it works</div>
<div class="b" style="left:12px;top:564px;width:904px;height:5px;background:linear-gradient(to right,#5cc046 0%,#2f6e24 25%,#000 50%,#5e150c 75%,#e8391f 100%);border-radius:3px;"></div>
<div class="t" style="left:19.0px;top:575.0px;font-size:12.6px;color:#4a505a;line-height:11px;transform:rotate(45deg);transform-origin:0 0;">-1.00</div>
<div class="t" style="left:172.5px;top:575.0px;font-size:12.6px;color:#4a505a;line-height:11px;transform:rotate(45deg);transform-origin:0 0;">-0.75</div>
<div class="t" style="left:418.5px;top:575.0px;font-size:12.6px;color:#4a505a;line-height:11px;transform:rotate(45deg);transform-origin:0 0;">-0.20</div>
<div class="t" style="left:493.0px;top:573.5px;font-size:12.6px;color:#4a505a;line-height:11px;transform:rotate(45deg);transform-origin:0 0;">+0.20</div>
<div class="t" style="left:629.7px;top:573.4px;font-size:12.6px;color:#4a505a;line-height:11px;transform:rotate(45deg);transform-origin:0 0;">+0.75</div>
<div class="t" style="left:891.8px;top:573.4px;font-size:12.6px;color:#4a505a;line-height:11px;transform:rotate(45deg);transform-origin:0 0;">+1.00</div>
<div class="t" style="left:164.51px;top:609.65px;font-size:11.40px;color:#3a7d2c;font-weight:bold;letter-spacing:0.207px;transform:scaleX(1.0473);transform-origin:0 0;">Oversold</div>
<div class="t" style="left:164.36px;top:625.98px;font-size:11.60px;color:#444a55;letter-spacing:0.295px;transform:scaleX(1.0865);transform-origin:0 0;">Could be a good time to</div>
<div class="t" style="left:164.17px;top:641.58px;font-size:11.60px;color:#444a55;letter-spacing:0.242px;transform:scaleX(1.0722);transform-origin:0 0;">increase holdings.</div>
<div class="t" style="left:434.70px;top:615.85px;font-size:11.40px;color:#3d4350;font-weight:bold;letter-spacing:0.165px;transform:scaleX(1.0435);transform-origin:0 0;">Fair Value</div>
<div class="t" style="left:692.71px;top:609.65px;font-size:11.40px;color:#8a2a1a;font-weight:bold;letter-spacing:0.229px;transform:scaleX(1.0507);transform-origin:0 0;">Overbought</div>
<div class="t" style="left:622.86px;top:625.98px;font-size:11.60px;color:#444a55;letter-spacing:0.285px;transform:scaleX(1.0836);transform-origin:0 0;">Could be a good time to</div>
<div class="t" style="left:668.17px;top:641.58px;font-size:11.60px;color:#444a55;letter-spacing:0.256px;transform:scaleX(1.0742);transform-origin:0 0;">reduce holdings.</div>
<div class="t" style="left:15.44px;top:599.05px;font-size:11.40px;color:#5cc046;font-weight:bold;letter-spacing:0.485px;transform-origin:0.76px 3.95px;transform:rotate(90deg);">Extremly Oversold</div>
<div class="t" style="left:903.54px;top:598.05px;font-size:11.40px;color:#e8391f;font-weight:bold;letter-spacing:0.626px;transform-origin:0.76px 3.95px;transform:rotate(90deg);">Extremly Overbought</div>
<div class="b" style="left:12px;top:745px;width:904px;height:1px;background:#e1e3e6;"></div>
<div class="t" style="left:11.88px;top:766.05px;font-size:11.40px;color:#3d4350;font-weight:bold;letter-spacing:0.319px;transform:scaleX(1.0755);transform-origin:0 0;">Note:</div>
<div class="t" style="left:47.96px;top:766.05px;font-size:11.40px;color:#444a55;letter-spacing:0.263px;transform:scaleX(1.0834);transform-origin:0 0;">scores can stay extremely overbought or oversold for a few weeks so paitence is required at times.</div>
<svg style="left:1100px;top:140px" width="540" height="460" viewBox="1100 140 540 460">
<defs><linearGradient id="pbg" x1="0" y1="1" x2="1" y2="0">
<stop offset="0" stop-color="#a6e894"/><stop offset="0.5" stop-color="#fefee0"/><stop offset="1" stop-color="#9f4830"/>
</linearGradient></defs>
<rect x="1208.5" y="158.4" width="402.9" height="388.6" fill="url(#pbg)"/>
<line x1="1208.5" x2="1611.4" y1="208.5" y2="208.5" stroke="#e6e6e6" stroke-opacity="0.85" stroke-width="1"/>
<line x1="1208.5" x2="1611.4" y1="256.5" y2="256.5" stroke="#e6e6e6" stroke-opacity="0.85" stroke-width="1"/>
<line x1="1208.5" x2="1611.4" y1="304.9" y2="304.9" stroke="#e6e6e6" stroke-opacity="0.85" stroke-width="1"/>
<line x1="1208.5" x2="1611.4" y1="401.5" y2="401.5" stroke="#e6e6e6" stroke-opacity="0.85" stroke-width="1"/>
<line x1="1208.5" x2="1611.4" y1="450.5" y2="450.5" stroke="#e6e6e6" stroke-opacity="0.85" stroke-width="1"/>
<line x1="1208.5" x2="1611.4" y1="498.5" y2="498.5" stroke="#e6e6e6" stroke-opacity="0.85" stroke-width="1"/>
<line y1="158.4" y2="547.0" x1="1308.6" x2="1308.6" stroke="#e6e6e6" stroke-opacity="0.85" stroke-width="1"/>
<line y1="158.4" y2="547.0" x1="1509.5" x2="1509.5" stroke="#e6e6e6" stroke-opacity="0.85" stroke-width="1"/>
<rect x="1208.5" y="158.4" width="402.9" height="388.6" fill="none" stroke="#d4d4d4" stroke-width="1"/>
<line x1="1208.0" x2="1611.9" y1="547.5" y2="547.5" stroke="#ccd6eb" stroke-width="1"/>
<line y1="547.0" y2="555.0" x1="1208.5" x2="1208.5" stroke="#ccd6eb" stroke-width="1"/>
<line y1="547.0" y2="555.0" x1="1308.6" x2="1308.6" stroke="#ccd6eb" stroke-width="1"/>
<line y1="547.0" y2="555.0" x1="1410" x2="1410" stroke="#ccd6eb" stroke-width="1"/>
<line y1="547.0" y2="555.0" x1="1509.5" x2="1509.5" stroke="#ccd6eb" stroke-width="1"/>
<line y1="547.0" y2="555.0" x1="1611" x2="1611" stroke="#ccd6eb" stroke-width="1"/>
<line x1="1208.5" x2="1611.4" y1="353.2" y2="353.2" stroke="#000" stroke-width="2"/>
<line y1="158.4" y2="547.0" x1="1410.0" x2="1410.0" stroke="#000" stroke-width="2"/>
<path d="M1363.2 437.8 L1367.6000000000001 442.2 L1363.2 446.59999999999997 L1358.8 442.2 Z" fill="#c22b17"/>
<path d="M1377.5 424.8 L1381.5 432.8 L1373.5 432.8 Z" fill="#c22b17"/>
<rect x="1405.5" y="415" width="8" height="8" fill="#c22b17"/>
<rect x="1300.5" y="413.4" width="8" height="8" fill="#c22b17"/>
<path d="M1429.3 378 L1437.3 378 L1433.3 386 Z" fill="#c22b17"/>
<path d="M1437.6 375.6 L1445.6 375.6 L1441.6 383.6 Z" fill="#c22b17"/>
<circle cx="1449.2" cy="379.9" r="4" fill="#c22b17"/>
<circle cx="1459.4" cy="355.6" r="4" fill="#c22b17"/>
<path d="M1460.5 352.6 L1468.5 352.6 L1464.5 360.6 Z" fill="#c22b17"/>
<circle cx="1486.2" cy="345.6" r="2.5" fill="#c22b17"/>
<circle cx="1486.2" cy="327.7" r="4" fill="#c22b17"/>
<path d="M1499 304.2 L1503.2 308.4 L1499 312.59999999999997 L1494.8 308.4 Z" fill="#c22b17"/>
</svg>
<svg style="left:0;top:0" width="1640" height="784" viewBox="0 0 1640 784"><text transform="translate(1468.58,297.1) scale(1.0015,1)" x="0" y="0" font-family="Liberation Sans" font-weight="bold" font-size="13.3" fill="#000" stroke="#fff" stroke-width="1.7" stroke-linejoin="round" paint-order="stroke" style="font-kerning:none">XLC: 0.23</text></svg>
<svg style="left:0;top:0" width="1640" height="784" viewBox="0 0 1640 784"><text transform="translate(1454.58,316.2) scale(0.9865,1)" x="0" y="0" font-family="Liberation Sans" font-weight="bold" font-size="13.3" fill="#000" stroke="#fff" stroke-width="1.7" stroke-linejoin="round" paint-order="stroke" style="font-kerning:none">XLK: 0.13</text></svg>
<svg style="left:0;top:0" width="1640" height="784" viewBox="0 0 1640 784"><text transform="translate(1425.89,344.8) scale(0.9730,1)" x="0" y="0" font-family="Liberation Sans" font-weight="bold" font-size="13.3" fill="#000" stroke="#fff" stroke-width="1.7" stroke-linejoin="round" paint-order="stroke" style="font-kerning:none">XLB: −0.02</text></svg>
<svg style="left:0;top:0" width="1640" height="784" viewBox="0 0 1640 784"><text transform="translate(1408.88,368) scale(1.0036,1)" x="0" y="0" font-family="Liberation Sans" font-weight="bold" font-size="13.3" fill="#000" stroke="#fff" stroke-width="1.7" stroke-linejoin="round" paint-order="stroke" style="font-kerning:none">XLI: −0.14</text></svg>
<svg style="left:0;top:0" width="1640" height="784" viewBox="0 0 1640 784"><text transform="translate(1266.49,405) scale(0.9589,1)" x="0" y="0" font-family="Liberation Sans" font-weight="bold" font-size="13.3" fill="#000" stroke="#fff" stroke-width="1.7" stroke-linejoin="round" paint-order="stroke" style="font-kerning:none">XLRE: −0.33</text></svg>
<svg style="left:0;top:0" width="1640" height="784" viewBox="0 0 1640 784"><text transform="translate(1374.38,407) scale(0.9844,1)" x="0" y="0" font-family="Liberation Sans" font-weight="bold" font-size="13.3" fill="#000" stroke="#fff" stroke-width="1.7" stroke-linejoin="round" paint-order="stroke" style="font-kerning:none">XLE: −0.34</text></svg>
<svg style="left:0;top:0" width="1640" height="784" viewBox="0 0 1640 784"><text transform="translate(1328.88,430) scale(0.9844,1)" x="0" y="0" font-family="Liberation Sans" font-weight="bold" font-size="13.3" fill="#000" stroke="#fff" stroke-width="1.7" stroke-linejoin="round" paint-order="stroke" style="font-kerning:none">XLP: −0.46</text></svg>
<div class="t" style="left:1176.96px;top:157.97px;font-size:9.60px;color:#606060;transform:scaleX(1.0400);transform-origin:0 0;">1.00</div>
<div class="t" style="left:1176.99px;top:206.25px;font-size:9.60px;color:#606060;transform:scaleX(1.0400);transform-origin:0 0;">0.75</div>
<div class="t" style="left:1176.96px;top:254.52px;font-size:9.60px;color:#606060;transform:scaleX(1.0400);transform-origin:0 0;">0.50</div>
<div class="t" style="left:1176.99px;top:302.80px;font-size:9.60px;color:#606060;transform:scaleX(1.0400);transform-origin:0 0;">0.25</div>
<div class="t" style="left:1176.96px;top:351.07px;font-size:9.60px;color:#606060;transform:scaleX(1.0400);transform-origin:0 0;">0.00</div>
<div class="t" style="left:1171.16px;top:399.87px;font-size:9.60px;color:#606060;transform:scaleX(1.0400);transform-origin:0 0;">−0.25</div>
<div class="t" style="left:1171.13px;top:448.47px;font-size:9.60px;color:#606060;transform:scaleX(1.0400);transform-origin:0 0;">−0.50</div>
<div class="t" style="left:1171.16px;top:497.07px;font-size:9.60px;color:#606060;transform:scaleX(1.0400);transform-origin:0 0;">−0.75</div>
<div class="t" style="left:1171.13px;top:545.67px;font-size:9.60px;color:#606060;transform:scaleX(1.0400);transform-origin:0 0;">−1.00</div>
<div class="t" style="left:1202.31px;top:559.27px;font-size:9.60px;color:#606060;transform:scaleX(1.0400);transform-origin:0 0;">−1</div>
<div class="t" style="left:1299.11px;top:559.27px;font-size:9.60px;color:#606060;transform:scaleX(1.0400);transform-origin:0 0;">−0.5</div>
<div class="t" style="left:1407.22px;top:559.27px;font-size:9.60px;color:#606060;transform:scaleX(1.0400);transform-origin:0 0;">0</div>
<div class="t" style="left:1503.08px;top:559.27px;font-size:9.60px;color:#606060;transform:scaleX(1.0400);transform-origin:0 0;">0.5</div>
<div class="t" style="left:1604.39px;top:559.27px;font-size:9.60px;color:#606060;transform:scaleX(1.0400);transform-origin:0 0;">1</div>
<div class="t" style="left:1276.43px;top:580.20px;font-size:10.40px;color:#2e8a24;letter-spacing:0.823px;transform:scaleX(1.3142);transform-origin:0 0;">&lt;---</div>
<div class="t" style="left:1304.09px;top:580.20px;font-size:10.40px;color:#2e8a24;letter-spacing:0.119px;transform:scaleX(1.0319);transform-origin:0 0;">Oversold</div>
<div class="t" style="left:1363.13px;top:579.06px;font-size:10.80px;color:#666666;font-weight:bold;letter-spacing:-0.083px;">Absolute Score</div>
<div class="t" style="left:1457.49px;top:580.20px;font-size:10.40px;color:#ee3029;letter-spacing:0.113px;transform:scaleX(1.0293);transform-origin:0 0;">Overbought</div>
<div class="t" style="left:1518.19px;top:580.20px;font-size:10.40px;color:#ee3029;letter-spacing:0.815px;transform:scaleX(1.3101);transform-origin:0 0;">---&gt;</div>
<div class="t" style="left:1160.79px;top:501.20px;font-size:10.40px;color:#2e8a24;letter-spacing:2.504px;transform-origin:0.51px 3.60px;transform:rotate(-90deg);">&lt;---</div>
<div class="t" style="left:1160.81px;top:473.60px;font-size:10.40px;color:#2e8a24;letter-spacing:0.207px;transform-origin:0.49px 3.60px;transform:rotate(-90deg);">Oversold</div>
<div class="t" style="left:1160.75px;top:414.02px;font-size:11.20px;color:#666666;font-weight:bold;letter-spacing:-0.411px;transform-origin:0.75px 3.88px;transform:rotate(-90deg);">Relative Score (vs SPY)</div>
<div class="t" style="left:1160.81px;top:281.80px;font-size:10.40px;color:#ee3029;letter-spacing:0.103px;transform-origin:0.49px 3.60px;transform:rotate(-90deg);">Overbought</div>
<div class="t" style="left:1160.84px;top:220.80px;font-size:10.40px;color:#ee3029;letter-spacing:2.336px;transform-origin:0.46px 3.60px;transform:rotate(-90deg);">---&gt;</div>
<div class="b" style="left:1112px;top:605px;width:560px;height:33px;background:#ededed;border-radius:4px;"></div>
<div class="b" style="left:1129.3px;top:614.2px;width:15.2px;height:15.2px;background:#ffffff;border:1px solid #c9ccd1;border-radius:2px;"></div>
<div class="t" style="left:1148.87px;top:621.18px;font-size:11.60px;color:#444a55;font-weight:bold;letter-spacing:0.097px;transform:scaleX(1.0245);transform-origin:0 0;">Tail Length</div>
<div class="b" style="left:1228px;top:621.8px;width:79px;height:3.2px;background:#dde1e6;border-radius:2px;"></div>
<div class="b" style="left:1228px;top:621.8px;width:14px;height:3.2px;background:#4e9ce8;border-radius:2px;"></div>
<div class="b" style="left:1236.2px;top:617.3px;width:12.2px;height:12.2px;background:#ffffff;border:1.5px solid #4e9ce8;border-radius:50%;"></div>
<div class="b" style="left:1318px;top:610px;width:22px;height:21.6px;background:#ffffff;border-radius:2px;"></div>
<div class="t" style="left:1325.81px;top:620.98px;font-size:11.60px;color:#444a55;">3</div>
<div class="t" style="left:1346.95px;top:621.18px;font-size:11.60px;color:#444a55;letter-spacing:0.100px;transform:scaleX(1.0175);transform-origin:0 0;">Weeks</div>
</div></body></html>
